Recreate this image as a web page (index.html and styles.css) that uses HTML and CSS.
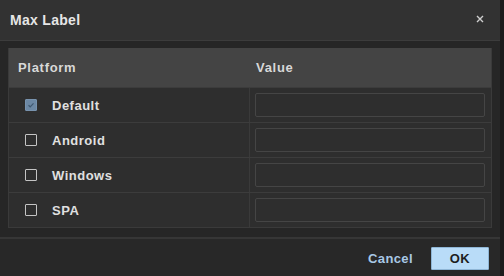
FILE: index.html
```html
<!DOCTYPE html>
<html>
<head>
<meta charset="utf-8">
<link rel="stylesheet" href="styles.css">
</head>
<body>
<div class="dialog">
  <div class="header">
    <span class="title">Max Label</span>
    <svg class="close" width="8" height="8" viewBox="0 0 8 8"><path d="M1 1L7 7M7 1L1 7" stroke="#cfcfcf" stroke-width="1.4" fill="none"/></svg>
  </div>
  <div class="body">
    <div class="table">
      <div class="row head">
        <div class="cell c1">Platform</div>
        <div class="cell c2">Value</div>
      </div>
      <div class="row">
        <div class="cell c1"><span class="cb checked"><svg width="8" height="8" viewBox="0 0 8 8"><path d="M1.5 4.2L3.2 5.8L6.5 2.3" stroke="#3f5870" stroke-width="1.2" fill="none"/></svg></span><span class="lbl">Default</span></div>
        <div class="cell c2"><div class="input"></div></div>
      </div>
      <div class="row">
        <div class="cell c1"><span class="cb"></span><span class="lbl">Android</span></div>
        <div class="cell c2"><div class="input"></div></div>
      </div>
      <div class="row">
        <div class="cell c1"><span class="cb"></span><span class="lbl">Windows</span></div>
        <div class="cell c2"><div class="input"></div></div>
      </div>
      <div class="row last">
        <div class="cell c1"><span class="cb"></span><span class="lbl">SPA</span></div>
        <div class="cell c2"><div class="input"></div></div>
      </div>
    </div>
  </div>
  <div class="footer">
    <span class="cancel">Cancel</span>
    <span class="ok">OK</span>
  </div>
</div>
</body>
</html>
```
FILE: styles.css
```css
html, body {
  margin: 0;
  padding: 0;
  background: #1c1c1c;
}
body {
  width: 504px;
  height: 276px;
  overflow: hidden;
  font-family: "Liberation Sans", Arial, sans-serif;
}
.dialog {
  width: 500px;
  height: 276px;
  background: #262626;
  display: flex;
  flex-direction: column;
}
.header {
  height: 40px;
  background: #323232;
  border-bottom: 1px solid #3c3c3c;
  display: flex;
  align-items: center;
  justify-content: space-between;
  padding: 0 16px 0 10px;
  box-sizing: content-box;
}
.title {
  color: #e6e6e6;
  font-weight: bold;
  font-size: 14px;
  letter-spacing: 0.3px;
  margin-top: -1px;
}
.close {
  display: block;
  margin-top: -2px;
}
.body {
  padding: 7px 9px 0 8px;
  height: 189px;
  border-bottom: 2px solid #363636;
  background: #262626;
}
.table {
  border: 1px solid #3a3a3a;
  border-top: none;
  width: 482px;
  background: #2e2e2e;
}
.row {
  display: grid;
  grid-template-columns: 241px 1fr;
  height: 35px;
  border-top: 1px solid #3c3c3c;
  box-sizing: border-box;
}
.row.head {
  height: 39px;
  border-top: none;
  background: #444444;
}
.cell {
  display: flex;
  align-items: center;
}
.c1 {
  border-right: 1px solid #3a3a3a;
  padding-left: 16px;
}
.head .c1 {
  padding-left: 9px;
  border-right: none;
}
.head .c2 {
  padding-left: 6px;
}
.head .cell {
  color: #d8d8d8;
  font-weight: bold;
  font-size: 13px;
  letter-spacing: 0.7px;
}
.c2 {
  padding: 0 6px 0 5px;
}
.input {
  width: 100%;
  height: 24px;
  box-sizing: border-box;
  border: 1.5px solid #454545;
  border-radius: 2px;
  background: #2e2e2e;
}
.cb {
  width: 12px;
  height: 12px;
  box-sizing: border-box;
  border: 1.5px solid #c4c4c4;
  border-radius: 1px;
  display: flex;
  align-items: center;
  justify-content: center;
}
.cb.checked {
  background: #6c88a4;
  border-color: #7893ae;
}
.cb svg {
  display: block;
}
.lbl {
  margin-left: 15px;
  color: #e0e0e0;
  font-weight: bold;
  font-size: 13px;
  letter-spacing: 0.5px;
}
.footer {
  flex: 1;
  background: #282828;
  display: flex;
  align-items: center;
  justify-content: flex-end;
  padding: 0 11px 0 0;
}
.cancel {
  color: #a9c8e6;
  font-weight: bold;
  font-size: 13px;
  letter-spacing: 0.4px;
  margin-right: 18px;
  margin-top: 1px;
}
.ok {
  width: 58px;
  height: 23px;
  box-sizing: border-box;
  background: #b9dcf8;
  border: 1px solid #8fb6d6;
  border-radius: 1px;
  color: #1e1e1e;
  font-weight: bold;
  font-size: 13px;
  letter-spacing: 0.4px;
  display: flex;
  align-items: center;
  justify-content: center;
  margin-top: 1px;
}
```
